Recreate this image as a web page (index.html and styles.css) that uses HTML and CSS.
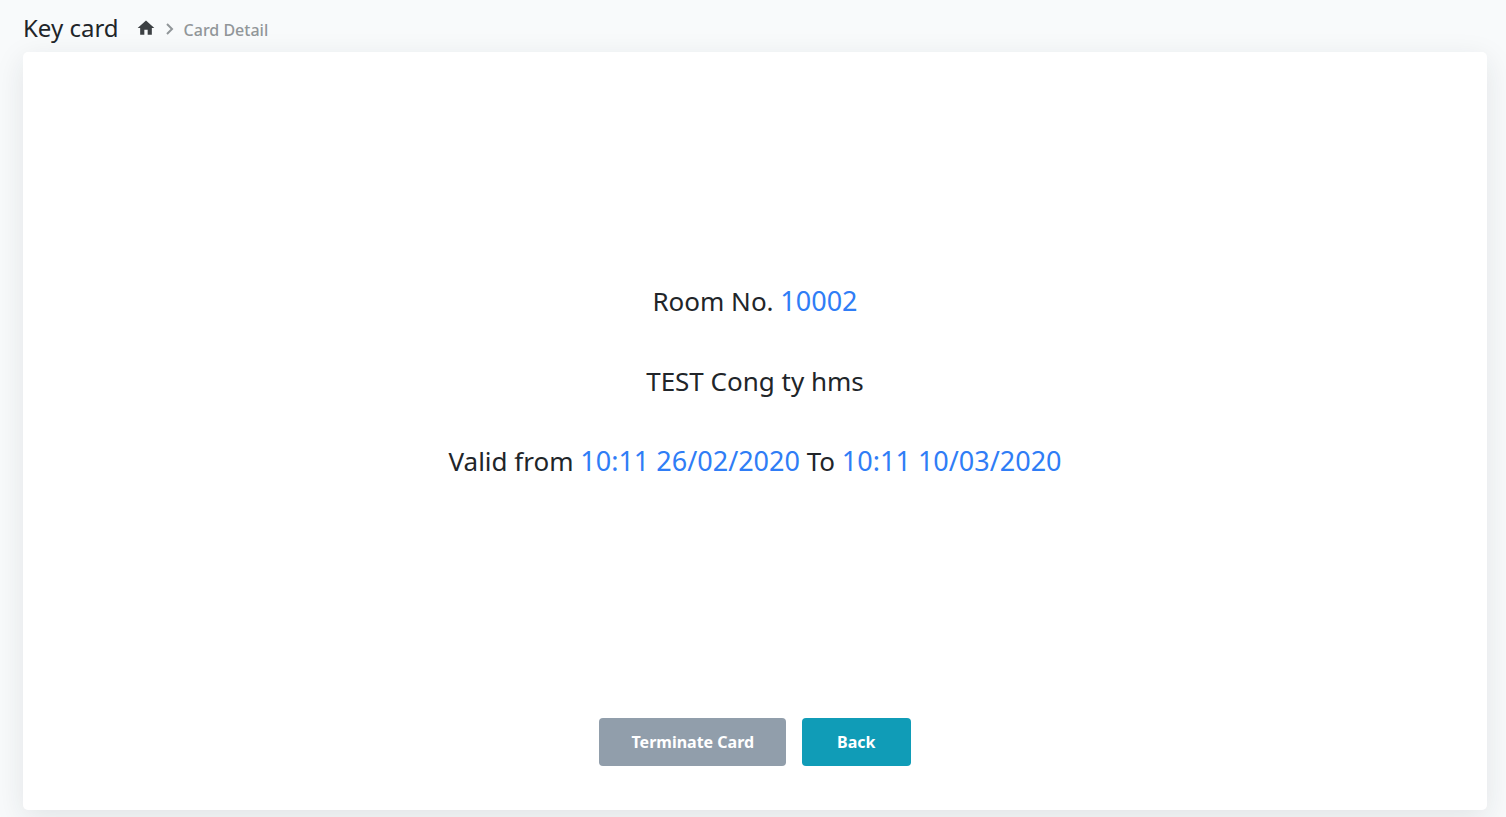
FILE: index.html
```html
<!DOCTYPE html>
<html lang="en">
<head>
    <meta charset="UTF-8">
    <meta name="viewport" content="width=device-width, initial-scale=1.0">
    <title>Key card</title>
    <link rel="stylesheet" href="styles.css">
</head>
<body>
    <header class="page-header">
        <h1>Key card</h1>
        <nav class="breadcrumb" aria-label="Breadcrumb">
            <a href="#" class="home" aria-label="Home">
                <svg width="20" height="20" viewBox="0 0 24 24"><path fill="currentColor" d="M10 20v-6h4v6h5v-8h3L12 3 2 12h3v8z"/></svg>
            </a>
            <svg class="arrow" width="8" height="12" viewBox="0 0 8 12"><path fill="none" stroke="currentColor" stroke-width="2" d="M1 1l5 5-5 5"/></svg>
            <span class="current">Card Detail</span>
        </nav>
    </header>

    <main class="card">
        <div class="card-info">
            <p>Room No. <span class="value">10002</span></p>
            <p>TEST Cong ty hms</p>
            <p>Valid from <span class="value">10:11 26/02/2020</span> To <span class="value">10:11 10/03/2020</span></p>
        </div>
        <div class="card-buttons">
            <button type="button" class="btn btn-terminate">Terminate Card</button>
            <button type="button" class="btn btn-back">Back</button>
        </div>
    </main>
</body>
</html>
```
FILE: styles.css
```css
* {
    box-sizing: border-box;
}
body {
    display: flex;
    flex-direction: column;
    min-height: 100vh;
    margin: 0;
    padding: 8px 19px 7px 23px;
    font-family: "Noto Sans", "Open Sans", sans-serif;
    background-color: #f8fafb;
    color: #212529;
}
.page-header {
    display: flex;
    align-items: center;
    height: 44px;
    padding-bottom: 4px;
}
h1 {
    margin: 0 17px 0 0;
    font-size: 24px;
    font-weight: 400;
    line-height: 32px;
}
.breadcrumb {
    display: flex;
    align-items: center;
    font-size: 16px;
    font-weight: 500;
    color: #919699;
}
.home {
    display: flex;
    color: #3c4043;
}
.arrow {
    margin: 2px 10px 0 10px;
}
.current {
    padding-top: 4px;
}
.card {
    flex: 1;
    display: flex;
    flex-direction: column;
    padding-bottom: 44px;
    background-color: #fff;
    border-radius: 5px;
    box-shadow: 0 8px 30px rgba(33, 37, 51, 0.1);
}
.card-info {
    flex: 1;
    display: flex;
    flex-direction: column;
    justify-content: center;
    gap: 40px;
    padding-bottom: 8px;
    text-align: center;
    font-size: 26px;
    line-height: 40px;
}
.card-info p {
    margin: 0;
}
.value {
    font-size: 27px;
    color: #2f7df6;
}
.card-buttons {
    display: flex;
    justify-content: center;
    gap: 16px;
}
.btn {
    height: 48px;
    padding: 0 32px;
    border: none;
    border-radius: 4px;
    font-family: inherit;
    font-size: 16px;
    font-weight: 700;
    color: #fff;
    cursor: pointer;
}
.btn-terminate {
    background-color: #919eab;
}
.btn-back {
    padding: 0 35px;
    background-color: #109cb7;
}
```
